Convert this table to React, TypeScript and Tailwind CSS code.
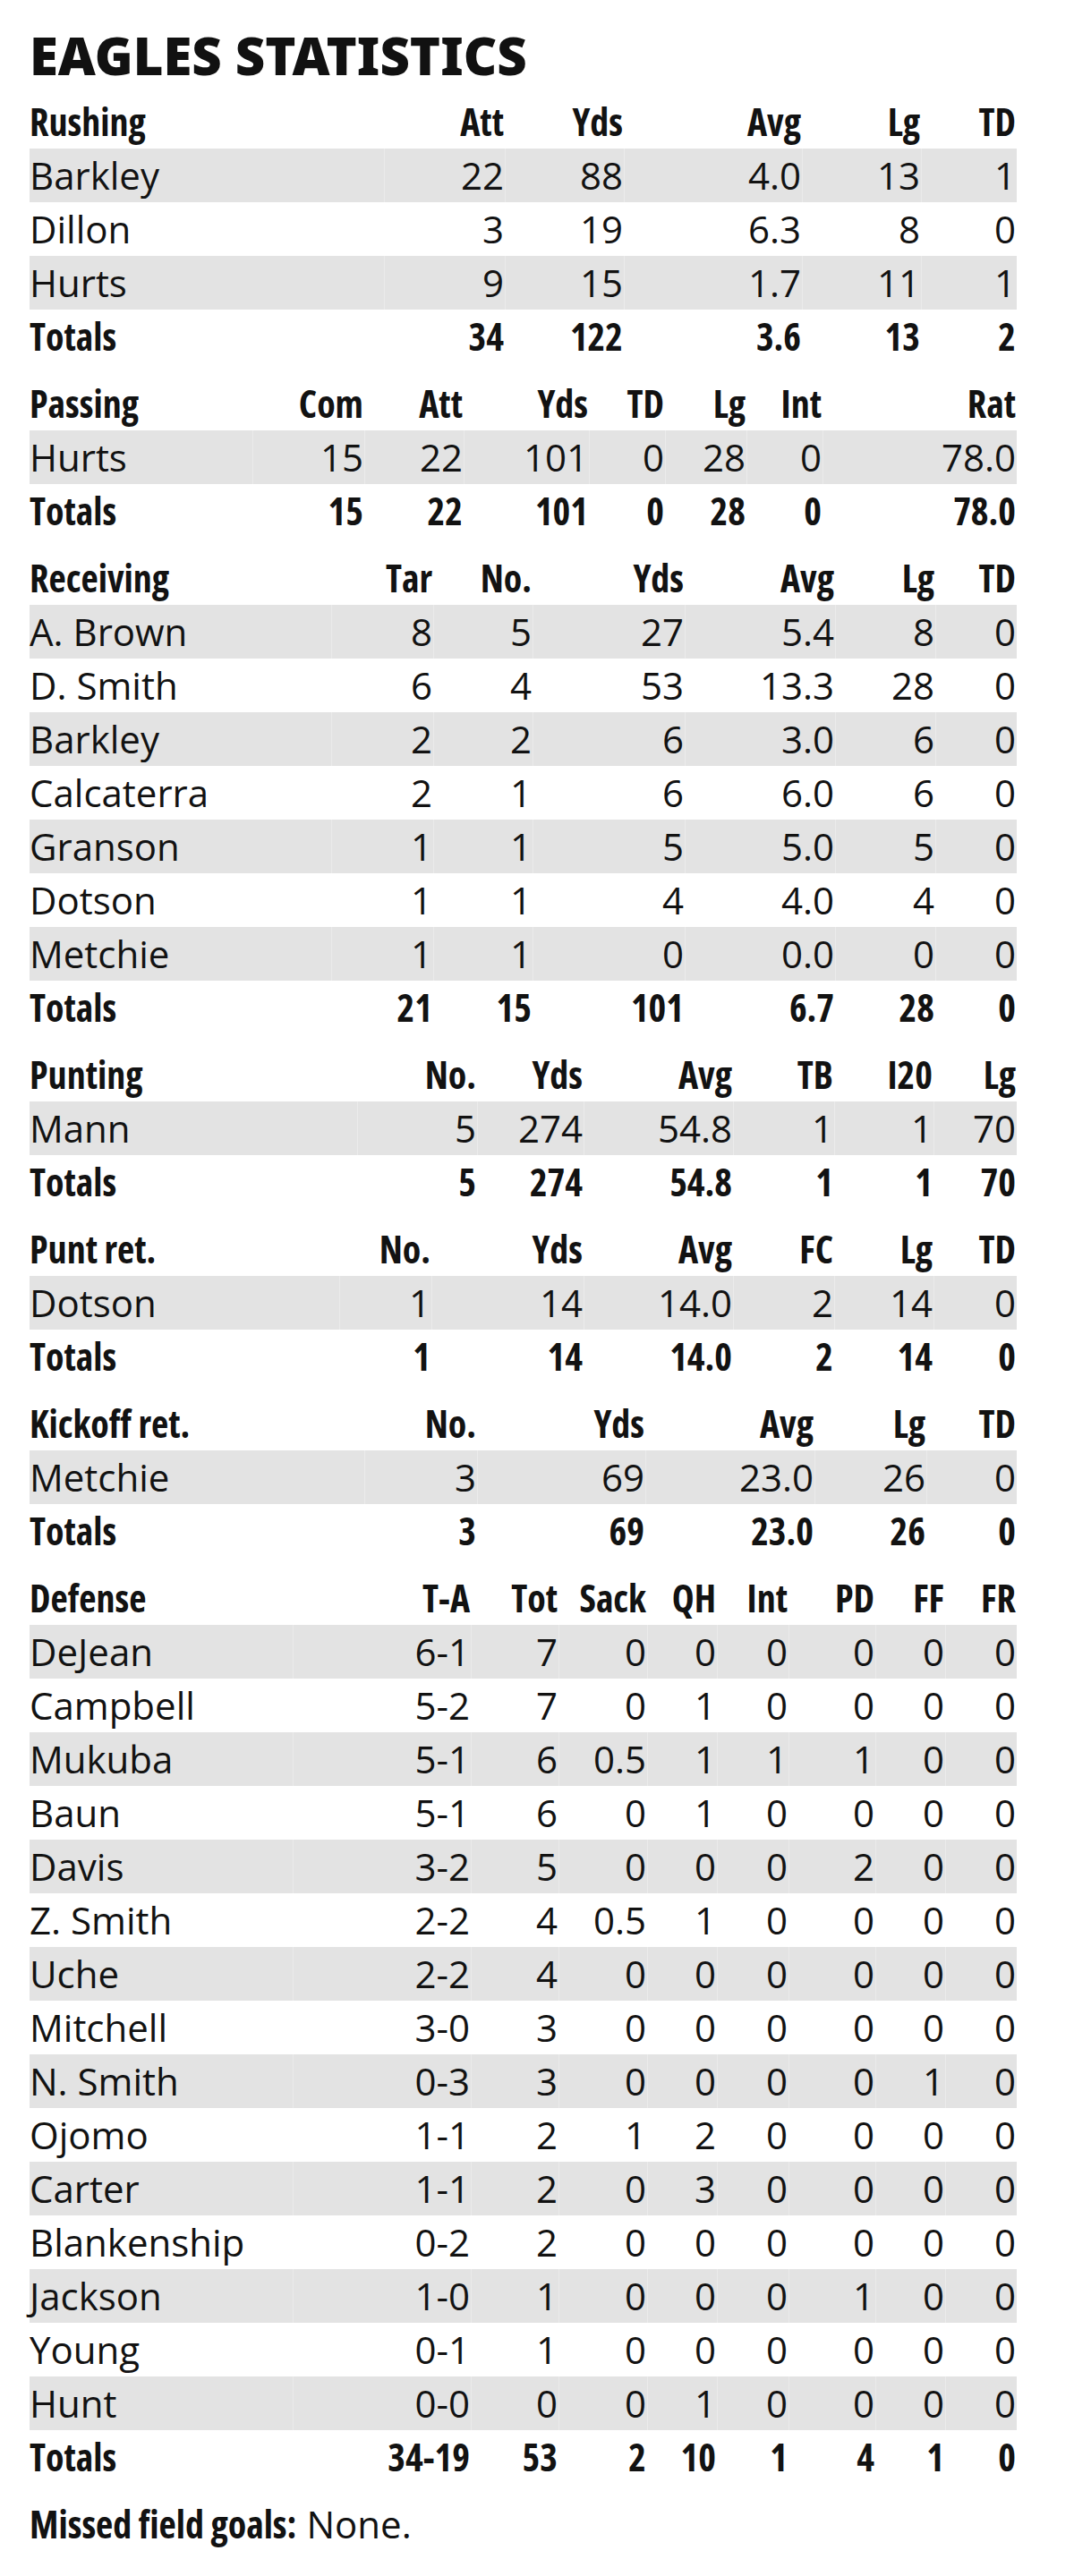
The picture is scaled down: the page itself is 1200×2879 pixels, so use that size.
import React from 'react';

type Section = {
    title: string;
    grid: string;
    cols: string[];
    rows: string[][];
    totals: string[];
};

const sections: Section[] = [
    {
        title: 'Rushing',
        grid: 'grid-cols-[397px_135px_133px_199px_133px_106px]',
        cols: ['Att', 'Yds', 'Avg', 'Lg', 'TD'],
        rows: [
            ['Barkley', '22', '88', '4.0', '13', '1'],
            ['Dillon', '3', '19', '6.3', '8', '0'],
            ['Hurts', '9', '15', '1.7', '11', '1'],
        ],
        totals: ['34', '122', '3.6', '13', '2'],
    },
    {
        title: 'Passing',
        grid: 'grid-cols-[250px_125px_111px_140px_85px_91px_85px_216px]',
        cols: ['Com', 'Att', 'Yds', 'TD', 'Lg', 'Int', 'Rat'],
        rows: [['Hurts', '15', '22', '101', '0', '28', '0', '78.0']],
        totals: ['15', '22', '101', '0', '28', '0', '78.0'],
    },
    {
        title: 'Receiving',
        grid: 'grid-cols-[338px_114px_111px_170px_168px_112px_90px]',
        cols: ['Tar', 'No.', 'Yds', 'Avg', 'Lg', 'TD'],
        rows: [
            ['A. Brown', '8', '5', '27', '5.4', '8', '0'],
            ['D. Smith', '6', '4', '53', '13.3', '28', '0'],
            ['Barkley', '2', '2', '6', '3.0', '6', '0'],
            ['Calcaterra', '2', '1', '6', '6.0', '6', '0'],
            ['Granson', '1', '1', '5', '5.0', '5', '0'],
            ['Dotson', '1', '1', '4', '4.0', '4', '0'],
            ['Metchie', '1', '1', '0', '0.0', '0', '0'],
        ],
        totals: ['21', '15', '101', '6.7', '28', '0'],
    },
    {
        title: 'Punting',
        grid: 'grid-cols-[367px_134px_119px_167px_113px_111px_92px]',
        cols: ['No.', 'Yds', 'Avg', 'TB', 'I20', 'Lg'],
        rows: [['Mann', '5', '274', '54.8', '1', '1', '70']],
        totals: ['5', '274', '54.8', '1', '1', '70'],
    },
    {
        title: 'Punt ret.',
        grid: 'grid-cols-[347px_103px_170px_167px_113px_111px_92px]',
        cols: ['No.', 'Yds', 'Avg', 'FC', 'Lg', 'TD'],
        rows: [['Dotson', '1', '14', '14.0', '2', '14', '0']],
        totals: ['1', '14', '14.0', '2', '14', '0'],
    },
    {
        title: 'Kickoff ret.',
        grid: 'grid-cols-[375px_126px_188px_189px_125px_100px]',
        cols: ['No.', 'Yds', 'Avg', 'Lg', 'TD'],
        rows: [['Metchie', '3', '69', '23.0', '26', '0']],
        totals: ['3', '69', '23.0', '26', '0'],
    },
    {
        title: 'Defense',
        grid: 'grid-cols-[295px_199px_98px_99px_78px_80px_97px_78px_79px]',
        cols: ['T-A', 'Tot', 'Sack', 'QH', 'Int', 'PD', 'FF', 'FR'],
        rows: [
            ['DeJean', '6-1', '7', '0', '0', '0', '0', '0', '0'],
            ['Campbell', '5-2', '7', '0', '1', '0', '0', '0', '0'],
            ['Mukuba', '5-1', '6', '0.5', '1', '1', '1', '0', '0'],
            ['Baun', '5-1', '6', '0', '1', '0', '0', '0', '0'],
            ['Davis', '3-2', '5', '0', '0', '0', '2', '0', '0'],
            ['Z. Smith', '2-2', '4', '0.5', '1', '0', '0', '0', '0'],
            ['Uche', '2-2', '4', '0', '0', '0', '0', '0', '0'],
            ['Mitchell', '3-0', '3', '0', '0', '0', '0', '0', '0'],
            ['N. Smith', '0-3', '3', '0', '0', '0', '0', '1', '0'],
            ['Ojomo', '1-1', '2', '1', '2', '0', '0', '0', '0'],
            ['Carter', '1-1', '2', '0', '3', '0', '0', '0', '0'],
            ['Blankenship', '0-2', '2', '0', '0', '0', '0', '0', '0'],
            ['Jackson', '1-0', '1', '0', '0', '0', '1', '0', '0'],
            ['Young', '0-1', '1', '0', '0', '0', '0', '0', '0'],
            ['Hunt', '0-0', '0', '0', '1', '0', '0', '0', '0'],
        ],
        totals: ['34-19', '53', '2', '10', '1', '4', '1', '0'],
    },
];

// bold lines (headers, totals) are set narrower than the plain figures
const Row = ({ grid, cells, shaded, bold }: { grid: string; cells: string[]; shaded?: boolean; bold?: boolean }) => (
    <div
        className={`grid ${grid} h-[60px] leading-[60px] ${shaded ? 'bg-[#e3e3e3]' : ''} ${bold ? 'font-bold [font-stretch:80%]' : 'font-normal [font-stretch:90%]'}`}
    >
        {cells.map((c, i) => {
            const last = i === cells.length - 1;
            return (
                <div
                    key={i}
                    className={`whitespace-nowrap ${i === 0 ? 'text-left' : 'text-right'} ${last ? 'pr-[1px]' : `pr-[1px] border-r ${shaded ? 'border-[#ebebeb]' : 'border-transparent'}`}`}
                >
                    {c}
                </div>
            );
        })}
    </div>
);

const StatTable = ({ s }: { s: Section }) => (
    <div>
        <Row grid={s.grid} cells={[s.title, ...s.cols]} bold />
        {s.rows.map((r, i) => (
            <Row key={i} grid={s.grid} cells={r} shaded={i % 2 === 0} />
        ))}
        <Row grid={s.grid} cells={['Totals', ...s.totals]} bold />
    </div>
);

export default function App() {
    return (
        <div className="w-[1200px] min-h-[2879px] bg-white pt-[33px] pl-[33px] pb-[28px] text-[#121212]">
            <h1 className="font-['Noto_Sans','Liberation_Sans',sans-serif] text-[58px] leading-[58px] font-black mb-[15px] text-[#111]">
                EAGLES STATISTICS
            </h1>
            <div className="w-[1103px] flex flex-col gap-[15px] font-['Open_Sans','Liberation_Sans',sans-serif] text-[42px]">
                {sections.map((s) => (
                    <StatTable key={s.title} s={s} />
                ))}
                <div className="h-[60px] leading-[60px] whitespace-nowrap [font-stretch:90%]">
                    <span className="font-bold [font-stretch:80%]">Missed field goals:</span> None.
                </div>
            </div>
        </div>
    );
}
